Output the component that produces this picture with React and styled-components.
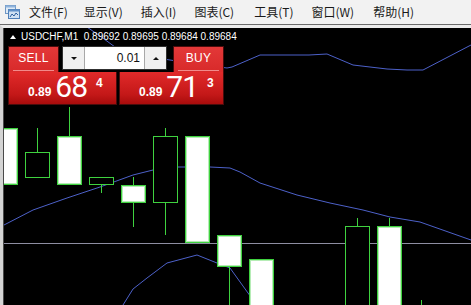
import React from "react"
import styled, {createGlobalStyle} from "styled-components"

const GlobalStyle = createGlobalStyle`
body {
  margin: 0;
  background: #000;
}
`

const Window = styled.div`
width: 471px;
height: 305px;
display: flex;
flex-direction: column;
overflow: hidden;
background: #000;
`

const MenuBar = styled.div`
height: 24px;
display: flex;
align-items: center;
background: #f2f2f2;
border-bottom: 1px solid #6b6b6b;
font-family: "Noto Sans CJK SC", sans-serif;
font-size: 12px;
color: #1a1a1a;
`

const AppIcon = styled.svg`
width: 15px;
height: 14px;
margin: 0 0 0 5px;
`

const MenuItem = styled.span`
padding: 0 ${({pad}) => pad}px 0 0;
margin-left: ${({first}) => (first ? 9 : 0)}px;
line-height: 24px;
white-space: nowrap;
`

const ChartFrame = styled.div`
flex: 1;
display: flex;
border-top: 3px solid #ececec;
border-left: 3px solid #d4d4d4;
`

const Chart = styled.div`
position: relative;
flex: 1;
border-left: 1px solid #4a4a4a;
background: #000;
overflow: hidden;
`

const Plot = styled.svg`
display: block;
width: 467px;
height: 277px;
`

const Header = styled.div`
position: absolute;
left: 6px;
top: 3px;
display: flex;
align-items: center;
gap: 5px;
font-family: "Liberation Sans", Arial, sans-serif;
font-size: 10px;
color: #fff;
white-space: pre;
`

const Caret = styled.span`
width: 0;
height: 0;
border-left: 3px solid transparent;
border-right: 3px solid transparent;
border-bottom: 4px solid #fff;
`

const Panel = styled.div`
position: absolute;
left: 4px;
top: 18px;
width: 219px;
display: grid;
grid-template-columns: 51px 3px 57px 51px 3px 51px;
grid-template-rows: 26px 33px;
font-family: "Liberation Sans", Arial, sans-serif;
color: #fff;
`

const SideButton = styled.div`
grid-column: ${({col}) => col};
grid-row: 1;
position: relative;
display: flex;
justify-content: center;
padding-top: 4px;
box-sizing: border-box;
background: linear-gradient(#e33838, #d82a2a);
border: 1px solid #4a0c0c;
border-bottom: none;
font-size: 12px;
letter-spacing: 0.3px;
&::after {
  content: "";
  position: absolute;
  left: 4px;
  right: 4px;
  bottom: 1px;
  height: 1px;
  background: #f28a8a;
}
`

const Spinner = styled.div`
grid-column: 3 / 5;
grid-row: 1;
height: 24px;
box-sizing: border-box;
display: flex;
border: 1px solid #303030;
background: #fff;
margin-right: 3px;
`

const SpinButton = styled.div`
width: 21px;
display: flex;
align-items: center;
justify-content: center;
background: #f0f0f0;
border-${({side}) => side}: 1px solid #a8a8a8;
`

const Arrow = styled.span`
width: 0;
height: 0;
border-left: 3px solid transparent;
border-right: 3px solid transparent;
${({up}) => (up ? "border-bottom" : "border-top")}: 3px solid #111;
`

const LotInput = styled.div`
flex: 1;
display: flex;
align-items: center;
justify-content: flex-end;
padding-right: 4px;
font-size: 12px;
color: #111;
`

const PriceBox = styled.div`
grid-column: ${({col}) => col};
grid-row: 2;
display: flex;
align-items: flex-end;
padding: 0 0 5px ${({pad}) => pad}px;
box-sizing: border-box;
background: linear-gradient(#e12a2a, #c41818 70%, #a80c0c);
border: 1px solid #4a0c0c;
border-top: none;
margin-right: ${({gap}) => gap}px;
`

const Small = styled.span`
font-size: 12px;
font-weight: bold;
line-height: 12px;
margin-bottom: 1px;
`

const Big = styled.span`
font-family: Roboto, "Liberation Sans", sans-serif;
font-size: 30px;
line-height: 24px;
letter-spacing: -1px;
margin-left: 4px;
`

const Pip = styled.span`
align-self: flex-start;
font-size: 12px;
font-weight: bold;
margin: 4px 0 0 9px;
`

const GREEN = "#3fd23f"

const upper = "84,25 100,36 115,47 150,57 190,63 227,68 232,67 260,55 309,55 327,54 353,65 370,67 387,69 407,70 423,70 471,45"
const middle = "4,225 33,210 67,198 100,187 133,175 153,170 178,167 210,167 230,168 240,172 260,183 297,195 330,203 363,210 390,217 420,222 471,240"
const lower = "118,312 123,305 133,289 147,278 167,263 197,255 217,263 230,268 248,293 262,312"

// x = left edge, body top/bottom, wick high/low, bull = white body
const candles = [
  {x: -7, top: 128, bottom: 185, bull: true},
  {x: 25, top: 152, bottom: 178, high: 128},
  {x: 57, top: 136, bottom: 185, high: 107, bull: true},
  {x: 89, top: 177, bottom: 185, low: 193},
  {x: 121, top: 185, bottom: 203, high: 177, low: 227, bull: true},
  {x: 153, top: 136, bottom: 203, high: 128, low: 235},
  {x: 185, top: 136, bottom: 243, bull: true},
  {x: 217, top: 235, bottom: 267, low: 312, bull: true},
  {x: 249, top: 259, bottom: 312, bull: true},
  {x: 345, top: 226, bottom: 312, high: 218},
  {x: 377, top: 226, bottom: 312, high: 218, bull: true},
  {x: 409, top: 320, bottom: 330, high: 300}
]

const Candle = ({x, top, bottom, high, low, bull}) => {
  const mid = x + 12
  const h = bottom - top
  return (
    <g>
      {high && <rect x={mid} y={high} width={1} height={top - high} fill={GREEN} />}
      {low && <rect x={mid} y={bottom} width={1} height={low - bottom} fill={GREEN} />}
      <rect x={x} y={top} width={25} height={h} fill={GREEN} />
      {bull ? (
        <>
          <rect x={x + 1} y={top + 1} width={23} height={h - 2} fill="#b6ecb6" />
          <rect x={x + 2} y={top + 2} width={21} height={h - 4} fill="#fff" />
        </>
      ) : (
        <rect x={x + 1} y={top + 1} width={23} height={h - 2} fill="#000" />
      )}
    </g>
  )
}

const menus = [
  ["文件(F)", 16],
  ["显示(V)", 18],
  ["插入(I)", 18],
  ["图表(C)", 20],
  ["工具(T)", 18],
  ["窗口(W)", 19],
  ["帮助(H)", 18]
]

const App = () => {
  return (
    <Window>
      <GlobalStyle />
      <MenuBar>
        <AppIcon viewBox="0 0 15 14">
          <rect x="0.5" y="0.5" width="10" height="8" fill="#dfeaf6" stroke="#6f97c4" />
          <rect x="0.5" y="0.5" width="10" height="2" fill="#8fb3dc" />
          <rect x="3.5" y="4.5" width="11" height="9" fill="#cfe0f2" stroke="#4f7fb8" />
          <rect x="3.5" y="4.5" width="11" height="2" fill="#5f8fc8" />
          <polyline points="5,12 7,9 9,11 11,8 13,10" fill="none" stroke="#2d5f9e" />
        </AppIcon>
        {menus.map(([label, pad], i) => (
          <MenuItem key={label} pad={pad} first={i === 0}>{label}</MenuItem>
        ))}
      </MenuBar>
      <ChartFrame>
        <Chart>
          <Plot viewBox="4 28 467 277">
            <rect x="4" y="243" width="467" height="1" fill="#8e8ea2" />
            <polyline points={upper} fill="none" stroke="#4d61c9" />
            <polyline points={middle} fill="none" stroke="#4d61c9" />
            <polyline points={lower} fill="none" stroke="#4d61c9" />
            {candles.map((c) => (
              <Candle key={c.x} {...c} />
            ))}
          </Plot>
          <Header>
            <Caret />
            <span>USDCHF,M1  0.89692 0.89695 0.89684 0.89684</span>
          </Header>
          <Panel>
            <SideButton col={1}>SELL</SideButton>
            <Spinner>
              <SpinButton side="right"><Arrow /></SpinButton>
              <LotInput>0.01</LotInput>
              <SpinButton side="left"><Arrow up /></SpinButton>
            </Spinner>
            <SideButton col={6}>BUY</SideButton>
            <PriceBox col="1 / 4" pad={19} gap={2}>
              <Small>0.89</Small>
              <Big>68</Big>
              <Pip>4</Pip>
            </PriceBox>
            <PriceBox col="4 / 7" pad={19} gap={0}>
              <Small>0.89</Small>
              <Big>71</Big>
              <Pip>3</Pip>
            </PriceBox>
          </Panel>
        </Chart>
      </ChartFrame>
    </Window>
  )
}

export default App
